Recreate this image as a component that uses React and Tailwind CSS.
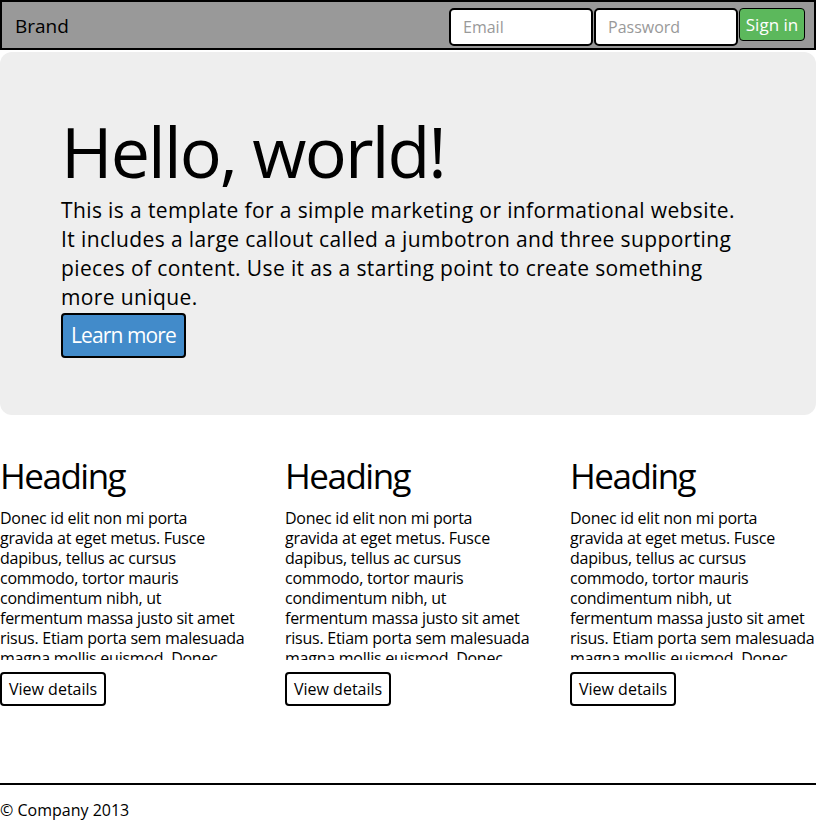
import React from "react";

const lines = [
  "Donec id elit non mi porta",
  "gravida at eget metus. Fusce",
  "dapibus, tellus ac cursus",
  "commodo, tortor mauris",
  "condimentum nibh, ut",
  "fermentum massa justo sit amet",
  "risus. Etiam porta sem malesuada",
  "magna mollis euismod. Donec",
  "sed odio dui.",
];

function Col() {
  return (
    <div className="flex flex-col">
      <h2 className="text-[35px] leading-[1.1] mt-[42px] tracking-[-1.5px]">Heading</h2>
      <p className="text-[16px] leading-[20px] tracking-[-0.25px] w-[270px] h-[152px] overflow-hidden mt-[12px] whitespace-nowrap">
        {lines.map((l, i) => (
          <span key={i} className="block">
            {l}
          </span>
        ))}
      </p>
      <div className="mt-[12px]">
        <button className="border-2 border-black rounded-[4px] bg-white px-[7px] h-[34px] text-[16px] leading-none">
          View details
        </button>
      </div>
    </div>
  );
}

export default function App() {
  return (
    <div className="w-[816px] min-h-[824px] bg-white text-black font-['Open_Sans',sans-serif] overflow-hidden">
      <nav className="h-[50px] bg-[#999999] border-2 border-black flex items-start justify-between pl-[13px] pr-[9px]">
        <div className="text-[19px] leading-none mt-[15px]">Brand</div>
        <div className="flex items-start mt-[6px]">
          <input
            placeholder="Email"
            className="w-[144px] h-[38px] bg-white border-2 border-black rounded-[5px] px-[12px] text-[16px] placeholder:text-[#999] outline-none"
          />
          <input
            placeholder="Password"
            className="ml-[1px] w-[144px] h-[38px] bg-white border-2 border-black rounded-[5px] px-[12px] text-[16px] placeholder:text-[#999] outline-none"
          />
          <button className="ml-[1px] w-[66px] h-[33px] bg-[#5cb85c] border-[1.5px] border-black rounded-[4px] text-white text-[17px] leading-none">
            Sign in
          </button>
        </div>
      </nav>
      <section className="mt-[2px] h-[363px] bg-[#eeeeee] rounded-[12px] pt-[61px] pl-[61px]">
        <h1 className="text-[70px] leading-[1.1] tracking-[-1.9px]">Hello, world!</h1>
        <p className="mt-[6px] text-[21px] leading-[29px] tracking-[0.38px] w-[682px]">
          This is a template for a simple marketing or informational website. It includes a large callout called a jumbotron and three supporting pieces of content. Use it as a starting point to create something more unique.
        </p>
        <button className="mt-[1px] h-[45px] px-[8px] bg-[#428bca] border-2 border-black rounded-[4px] text-white text-[21px] tracking-[-0.9px] leading-none">
          Learn more
        </button>
      </section>
      <div className="grid grid-cols-[285px_285px_1fr]">
        <Col />
        <Col />
        <Col />
      </div>
      <div className="mt-[77px] border-t-2 border-black pt-[15px] text-[16px] leading-[20px]">
        © Company 2013
      </div>
    </div>
  );
}
